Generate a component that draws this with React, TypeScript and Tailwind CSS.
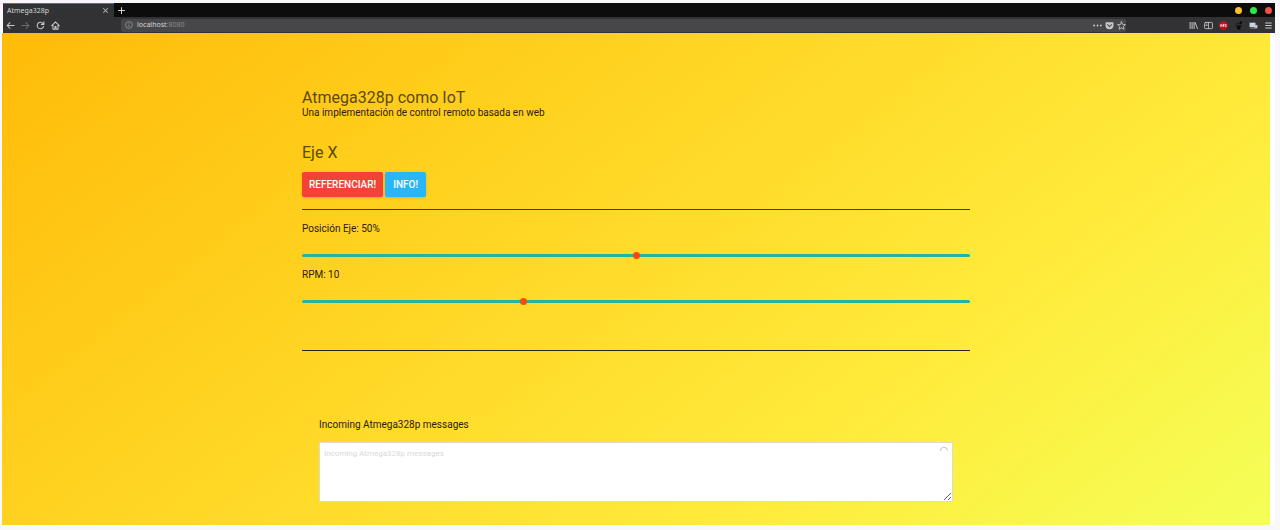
import { useState } from "react";
import type { ReactNode } from "react";

function Icon({ label, children }: { label: string; children: ReactNode }) {
  return (
    <button type="button" aria-label={label} className="flex size-[9px] shrink-0 items-center justify-center text-[#c9c9cd]">
      <svg viewBox="0 0 16 16" className="size-[9px]" fill="none" stroke="currentColor" strokeWidth="1.8" strokeLinecap="round" strokeLinejoin="round">
        {children}
      </svg>
    </button>
  );
}

function BrowserBar() {
  return (
    <header className="ml-px text-[7px] leading-[14px] text-[#d6d6d9]" style={{ fontFamily: '"Noto Sans", sans-serif' }}>
      <div className="flex h-[14px] items-center bg-[#0c0c0d]">
        <div className="flex h-full w-[111px] items-center justify-between border-t border-[#0a84ff] bg-[#323234] pr-1 pl-1">
          <span>Atmega328p</span>
          <button type="button" aria-label="Close tab" className="flex size-[9px] items-center justify-center text-[#b4b4b8]">
            <svg viewBox="0 0 16 16" className="size-[9px]" fill="none" stroke="currentColor" strokeWidth="1.8">
              <path d="M4 4l8 8M12 4l-8 8" />
            </svg>
          </button>
        </div>
        <button type="button" aria-label="New tab" className="ml-[3px] flex size-[9px] items-center justify-center">
          <svg viewBox="0 0 16 16" className="size-[9px]" fill="none" stroke="currentColor" strokeWidth="1.8">
            <path d="M8 2v12M2 8h12" />
          </svg>
        </button>
        <div className="ml-auto flex gap-2 pr-[3px]">
          <button type="button" aria-label="Minimize" className="size-[7px] rounded-full bg-[#fbc02d]" />
          <button type="button" aria-label="Maximize" className="size-[7px] rounded-full bg-[#2ee84a]" />
          <button type="button" aria-label="Close" className="size-[7px] rounded-full bg-[#ef5350]" />
        </div>
      </div>
      <nav className="flex h-4 items-center bg-[#323234] pr-[2px] pl-[3px]">
        <div className="flex w-[115px] gap-[6px]">
          <Icon label="Back"><path d="M14.5 8H2M7 3L2 8l5 5" /></Icon>
          <span className="flex opacity-40">
            <Icon label="Forward"><path d="M1.500 8H14M9 3l5 5-5 5" /></Icon>
          </span>
          <Icon label="Reload"><path d="M13.500 9.500A5.800 5.800 0 1 1 12.500 4.500M14 1.500V6H9.500" /></Icon>
          <Icon label="Home"><path d="M1 8.500L8 1.500l7 7M3.500 7.500V14.500h3.500V10h2v4.500h3.500V7.500" /></Icon>
        </div>
        <div className="flex h-[13px] flex-1 items-center gap-1 rounded-xs bg-[#474749] px-1">
          <svg viewBox="0 0 16 16" className="size-2 text-[#a0a0a4]" fill="none" stroke="currentColor" strokeWidth="1.400" aria-hidden="true">
            <circle cx="8" cy="8" r="6.800" />
            <path d="M8 7v5M8 4v1.500" />
          </svg>
          <span>localhost<span className="text-[#8a8a8e]">:8080</span></span>
          <div className="ml-auto -mr-1 flex items-center gap-[3px]">
            <Icon label="Page actions">
              <path d="M2 8h.1M8 8h.1M14 8h.1" strokeWidth="3.200" />
            </Icon>
            <Icon label="Save to Pocket">
              <path d="M2 2h12a1 1 0 0 1 1 1v4.500a7 7 0 0 1-14 0V3a1 1 0 0 1 1-1z" fill="currentColor" stroke="none" />
              <path d="M4.500 6.500L8 10l3.500-3.500" stroke="#474749" />
            </Icon>
            <Icon label="Bookmark">
              <path d="M8 1.500l2 4.500 5 .5-3.700 3.300L12.400 14.700 8 12.200l-4.400 2.500 1.100-4.900L1 6.500 6 6z" strokeWidth="1.500" />
            </Icon>
          </div>
        </div>
        <div className="ml-[63px] flex gap-[6px]">
          <Icon label="Library"><path d="M2 2.500v11M5.500 2.500v11M9 2.500v11M11 3l4 10.500" strokeWidth="1.700" /></Icon>
          <Icon label="Sidebar">
            <rect x="1" y="2.500" width="14" height="11" rx="1.500" strokeWidth="1.500" />
            <path d="M8 3v10M3.500 5.500h2M3.500 8h2" strokeWidth="1.400" />
          </Icon>
          <Icon label="Content blocker">
            <path d="M5 .5h6l4.500 4.500v6L11 15.500H5L.5 11V5z" fill="#c4101c" stroke="none" />
            <path d="M3 9.500V6.500h2v3M7.500 10V6h1.500v2H7.500M11 6.500h2L12 8l1 1.500h-2" stroke="#ffffff" strokeWidth="1.300" />
          </Icon>
          <Icon label="Gnome extensions">
            <g fill="#0c0c0d" stroke="none">
              <ellipse cx="12" cy="3" rx="2.200" ry="2.800" />
              <circle cx="7.500" cy="4" r="1.400" />
              <circle cx="4.800" cy="5.500" r="1.200" />
              <circle cx="2.800" cy="7.500" r="1" />
              <path d="M13 8.500C11 6 4 7 4.500 11c.3 3 3 5 5.500 4.500 2.500-.8 2-2.500 0-3.500 2 0 4-1.500 3-3.500z" />
            </g>
          </Icon>
          <Icon label="Screens">
            <rect x="1" y="3" width="10.500" height="8" fill="#c9d6e2" stroke="none" />
            <path d="M3 13h7" stroke="#6b7988" />
            <rect x="10" y="7" width="5" height="6" fill="#b9c2cc" stroke="none" />
          </Icon>
          <Icon label="Menu"><path d="M3 3.500h10M3 8h10M3 12.500h10" /></Icon>
        </div>
      </nav>
    </header>
  );
}

type SliderProps = {
  id: string;
  min: number;
  max: number;
  step: number;
  value: number;
  label: string;
  onChange: (value: number) => void;
};

function Slider({ id, min, max, step, value, label, onChange }: SliderProps) {
  return (
    <div className="h-[46px]">
      <label htmlFor={id} className="block">{label}</label>
      <input
        id={id}
        type="range"
        min={min}
        max={max}
        step={step}
        value={value}
        onChange={(e) => onChange(Number(e.target.value))}
        className="mt-[18px] block h-[3px] w-full cursor-pointer appearance-none rounded-xs bg-[#28b3a0] [&::-webkit-slider-thumb]:size-[7px] [&::-webkit-slider-thumb]:appearance-none [&::-webkit-slider-thumb]:rounded-full [&::-webkit-slider-thumb]:bg-[#f44a0c]"
      />
    </div>
  );
}

export default function App() {
  const [position, setPosition] = useState(50);
  const [rpm, setRpm] = useState(9.9);

  return (
    <div className="flex min-h-screen flex-col bg-[#f8f8fa] pt-[3px] pr-[5px] pb-[5px] pl-[2px]">
      <BrowserBar />
      <div className="flex flex-1 bg-white pr-[5px]">
        <main
          className="flex-1 bg-[linear-gradient(142deg,#ffbb08_0%,#ffeb3b_71%,#f4ff57_100%)] pb-5 text-[10px] leading-[14px] text-[#2b2108]"
          style={{ fontFamily: "Roboto, sans-serif" }}
        >
          <div className="mx-auto max-w-[668px] pt-[56px]">
            <h1 className="text-[16px] leading-[17px] text-[#5c4908]">Atmega328p como IoT</h1>
            <p>Una implementación de control remoto basada en web</p>

            <h2 className="mt-6 text-[16px] leading-[17px] text-[#5c4908]">Eje X</h2>
            <div className="mt-[11px] flex gap-[2px] font-medium text-white">
              <button type="button" className="h-[25px] rounded-xs bg-[#f44336] px-[7px] shadow-sm">REFERENCIAR!</button>
              <button type="button" className="h-[25px] rounded-xs bg-[#29b6f6] px-2 shadow-sm">INFO!</button>
            </div>
            <hr className="my-3 border-[#4a3c10]" />

            <Slider id="position" min={0} max={100} step={1} value={position} label={`Posición Eje: ${position}%`} onChange={setPosition} />
            <Slider id="rpm" min={0} max={30} step={0.1} value={rpm} label={`RPM: ${Math.round(rpm)}`} onChange={setRpm} />
            <hr className="mt-9 border-[#2a2410]" />

            <section className="mt-[67px] px-[17px]">
              <label htmlFor="messages" className="block">Incoming Atmega328p messages</label>
              <div className="relative mt-[10px]">
                <textarea
                  id="messages"
                  placeholder="Incoming Atmega328p messages"
                  className="block h-[60px] w-full border border-[#dcdcc8] bg-white px-1 py-1 text-[8px] placeholder:text-[#d8d8d8]"
                />
                <svg viewBox="0 0 10 10" className="absolute top-1 right-1 size-[10px]" fill="none" stroke="#c4c4c4" aria-hidden="true">
                  <path d="M1.500 5a3.500 3.500 0 0 1 7-.5" />
                </svg>
              </div>
            </section>
          </div>
        </main>
      </div>
    </div>
  );
}
